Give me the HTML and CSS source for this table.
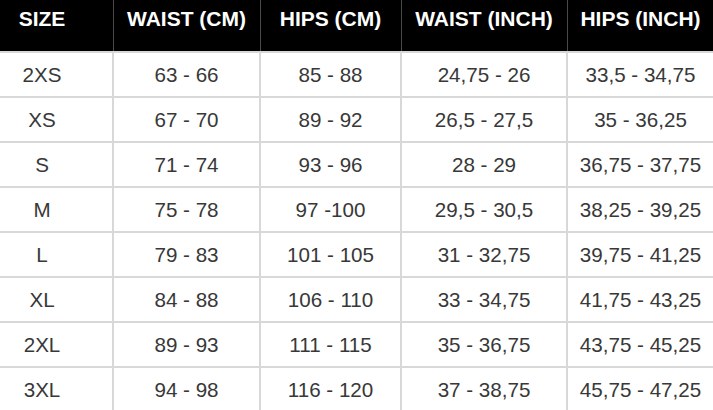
FILE: index.html
```html
<!DOCTYPE html>
<html lang="en">
<head>
<meta charset="utf-8">
<title>Size chart</title>
<link rel="stylesheet" href="styles.css">
</head>
<body>
<div class="wrap">
<table class="chart">
  <colgroup>
    <col class="c1"><col class="c2"><col class="c3"><col class="c4"><col class="c5">
  </colgroup>
  <thead>
    <tr>
      <th>SIZE</th>
      <th>WAIST (CM)</th>
      <th>HIPS (CM)</th>
      <th>WAIST (INCH)</th>
      <th>HIPS (INCH)</th>
    </tr>
  </thead>
  <tbody>
    <tr><td>2XS</td><td>63 - 66</td><td>85 - 88</td><td>24,75 - 26</td><td>33,5 - 34,75</td></tr>
    <tr><td>XS</td><td>67 - 70</td><td>89 - 92</td><td>26,5 - 27,5</td><td>35 - 36,25</td></tr>
    <tr><td>S</td><td>71 - 74</td><td>93 - 96</td><td>28 - 29</td><td>36,75 - 37,75</td></tr>
    <tr><td>M</td><td>75 - 78</td><td>97 -100</td><td>29,5 - 30,5</td><td>38,25 - 39,25</td></tr>
    <tr><td>L</td><td>79 - 83</td><td>101 - 105</td><td>31 - 32,75</td><td>39,75 - 41,25</td></tr>
    <tr><td>XL</td><td>84 - 88</td><td>106 - 110</td><td>33 - 34,75</td><td>41,75 - 43,25</td></tr>
    <tr><td>2XL</td><td>89 - 93</td><td>111 - 115</td><td>35 - 36,75</td><td>43,75 - 45,25</td></tr>
    <tr><td>3XL</td><td>94 - 98</td><td>116 - 120</td><td>37 - 38,75</td><td>45,75 - 47,25</td></tr>
  </tbody>
</table>
</div>
</body>
</html>
```
FILE: styles.css
```css
html, body {
  margin: 0;
  padding: 0;
  background: #ffffff;
}
.wrap {
  width: 713px;
  height: 410px;
  overflow: hidden;
}
.chart {
  margin-left: -30px;
  border-collapse: collapse;
  table-layout: fixed;
  width: 743px;
  font-family: "Liberation Sans", Arial, sans-serif;
}
.c1 { width: 142px; }
.c2 { width: 147px; }
.c3 { width: 141px; }
.c4 { width: 166px; }
.c5 { width: 147px; }
.chart th {
  background: #000000;
  color: #ffffff;
  font-weight: bold;
  font-size: 21px;
  line-height: 24px;
  height: 51px;
  box-sizing: border-box;
  padding: 7px 0 20px;
  vertical-align: top;
  text-align: center;
  border-left: 1px solid #4a4a4a;
  border-right: 1px solid #4a4a4a;
  border-bottom: 1px solid #cfcfcf;
}
.chart td {
  color: #383838;
  font-size: 20.6px;
  line-height: 24px;
  text-align: center;
  vertical-align: middle;
  padding: 0;
  height: 43px;
  border: 2px solid #d8d8d8;
}
```
